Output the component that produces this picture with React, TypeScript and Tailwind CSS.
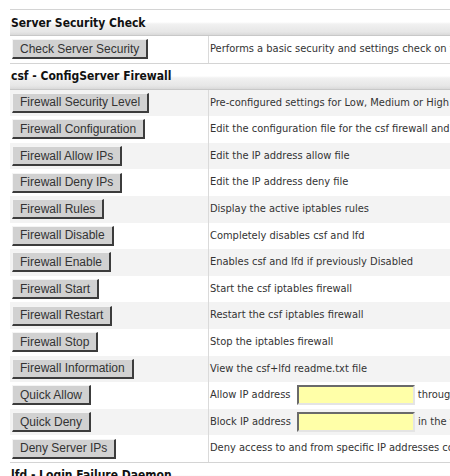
import React from 'react';

type Row = {
  label: string;
  desc?: string;
  input?: { before: string; after: string };
};

const Header: React.FC<{ title: string }> = ({ title }) => (
  <div className="h-[27px] flex items-center border-t border-b border-t-[#d4d4d4] border-b-[#c8c8c8] bg-[linear-gradient(to_bottom,#ffffff_0%,#ffffff_48%,#f1f1f1_56%,#e6e6e6_88%,#d9d9d9_100%)] px-px">
    <span className="font-['DejaVu_Sans_Condensed','DejaVu_Sans',sans-serif] font-bold text-[12px] text-[#111] whitespace-nowrap">
      {title}
    </span>
  </div>
);

const Button: React.FC<{ label: string }> = ({ label }) => (
  <button className="h-[20px] px-[7px] bg-[#d1d1d1] border border-t-[#f4f4f4] border-l-[#f4f4f4] border-r-2 border-b-2 border-r-[#3c3c3c] border-b-[#3c3c3c] font-['Liberation_Sans',Arial,sans-serif] text-[12px] leading-none text-[#333] whitespace-nowrap">
    {label}
  </button>
);

const TableRow: React.FC<{ row: Row; shaded: boolean }> = ({ row, shaded }) => (
  <div
    className={`h-[26.6px] grid grid-cols-[198px_1fr] ${
      shaded ? 'bg-[#f3f3f3]' : 'bg-white'
    }`}
  >
    <div className="flex items-center pl-[2px]">
      <Button label={row.label} />
    </div>
    <div className="flex items-center border-l border-l-[#dadada] pl-px font-['DejaVu_Sans_Condensed','DejaVu_Sans',sans-serif] text-[11px] text-[#333] whitespace-nowrap">
      {row.input ? (
        <>
          <span>{row.input.before}&nbsp;</span>
          <input
            type="text"
            className="ml-[3px] w-[118px] h-[20px] bg-[#ffffa8] border-2 border-t-[#6a6a6a] border-l-[#6a6a6a] border-r-[#e4e4e4] border-b-[#e4e4e4] outline-none"
          />
          <span>&nbsp;{row.input.after}</span>
        </>
      ) : (
        <span>{row.desc}</span>
      )}
    </div>
  </div>
);

const csfRows: Row[] = [
  { label: 'Firewall Security Level', desc: 'Pre-configured settings for Low, Medium or High firewall security' },
  { label: 'Firewall Configuration', desc: 'Edit the configuration file for the csf firewall and lfd' },
  { label: 'Firewall Allow IPs', desc: 'Edit the IP address allow file' },
  { label: 'Firewall Deny IPs', desc: 'Edit the IP address deny file' },
  { label: 'Firewall Rules', desc: 'Display the active iptables rules' },
  { label: 'Firewall Disable', desc: 'Completely disables csf and lfd' },
  { label: 'Firewall Enable', desc: 'Enables csf and lfd if previously Disabled' },
  { label: 'Firewall Start', desc: 'Start the csf iptables firewall' },
  { label: 'Firewall Restart', desc: 'Restart the csf iptables firewall' },
  { label: 'Firewall Stop', desc: 'Stop the iptables firewall' },
  { label: 'Firewall Information', desc: 'View the csf+lfd readme.txt file' },
  {
    label: 'Quick Allow',
    input: { before: 'Allow IP address', after: 'through the firewall and add to the allow file (csf.allow)' },
  },
  {
    label: 'Quick Deny',
    input: { before: 'Block IP address', after: 'in the firewall and add to the deny file (csf.deny)' },
  },
  { label: 'Deny Server IPs', desc: 'Deny access to and from specific IP addresses configured on the server' },
];

export default function App() {
  return (
    <div className="w-[450px] h-[476px] overflow-hidden bg-white">
      <div className="pt-[9px] pl-[10px]">
        <div className="w-[720px]">
          <Header title="Server Security Check" />
          <TableRow
            row={{
              label: 'Check Server Security',
              desc: 'Performs a basic security and settings check on the server',
            }}
            shaded={false}
          />
          <Header title="csf - ConfigServer Firewall" />
          {csfRows.map((row, i) => (
            <TableRow key={row.label} row={row} shaded={i % 2 === 0} />
          ))}
          <Header title="lfd - Login Failure Daemon" />
        </div>
      </div>
    </div>
  );
}
